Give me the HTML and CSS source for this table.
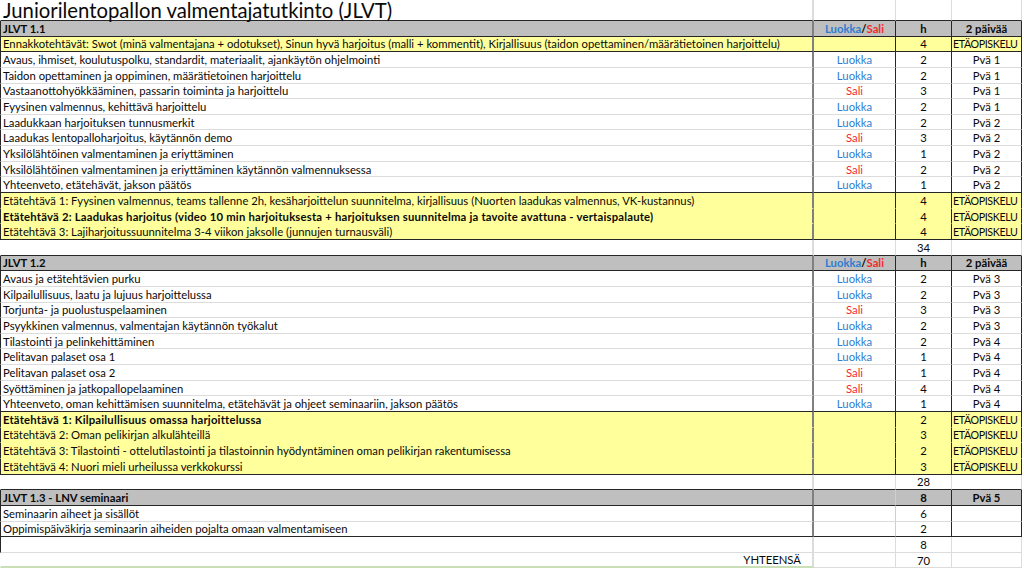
FILE: index.html
```html
<!DOCTYPE html>
<html lang="fi">
<head>
<meta charset="utf-8">
<title>JLVT</title>
<link rel="stylesheet" href="styles.css">
</head>
<body>
<table class="sheet">
<colgroup><col class="ca"><col class="cb"><col class="cc"><col class="cd"></colgroup>
<tr class="title"><td class="a">Juniorilentopallon valmentajatutkinto (JLVT)</td><td></td><td></td><td></td></tr>

<tr class="box hdr"><td class="a">JLVT 1.1</td><td class="b"><span class="blue">Luokka</span>/<span class="red">Sali</span></td><td class="c">h</td><td class="d">2 päivää</td></tr>
<tr class="box yel edge"><td class="a">Ennakkotehtävät: Swot (minä valmentajana + odotukset), Sinun hyvä harjoitus (malli + kommentit), Kirjallisuus (taidon opettaminen/määrätietoinen harjoittelu)</td><td class="b"></td><td class="c">4</td><td class="d etä">ETÄOPISKELU</td></tr>
<tr class="box"><td class="a">Avaus, ihmiset, koulutuspolku, standardit, materiaalit, ajankäytön ohjelmointi</td><td class="b blue">Luokka</td><td class="c">2</td><td class="d">Pvä 1</td></tr>
<tr class="box"><td class="a">Taidon opettaminen ja oppiminen, määrätietoinen harjoittelu</td><td class="b blue">Luokka</td><td class="c">2</td><td class="d">Pvä 1</td></tr>
<tr class="box"><td class="a">Vastaanottohyökkääminen, passarin toiminta ja harjoittelu</td><td class="b red">Sali</td><td class="c">3</td><td class="d">Pvä 1</td></tr>
<tr class="box"><td class="a">Fyysinen valmennus, kehittävä harjoittelu</td><td class="b blue">Luokka</td><td class="c">2</td><td class="d">Pvä 1</td></tr>
<tr class="box"><td class="a">Laadukkaan harjoituksen tunnusmerkit</td><td class="b blue">Luokka</td><td class="c">2</td><td class="d">Pvä 2</td></tr>
<tr class="box"><td class="a">Laadukas lentopalloharjoitus, käytännön demo</td><td class="b red">Sali</td><td class="c">3</td><td class="d">Pvä 2</td></tr>
<tr class="box"><td class="a">Yksilölähtöinen valmentaminen ja eriyttäminen</td><td class="b blue">Luokka</td><td class="c">1</td><td class="d">Pvä 2</td></tr>
<tr class="box"><td class="a">Yksilölähtöinen valmentaminen ja eriyttäminen käytännön valmennuksessa</td><td class="b red">Sali</td><td class="c">2</td><td class="d">Pvä 2</td></tr>
<tr class="box edge"><td class="a">Yhteenveto, etätehävät, jakson päätös</td><td class="b blue">Luokka</td><td class="c">1</td><td class="d">Pvä 2</td></tr>
<tr class="box yel"><td class="a">Etätehtävä 1: Fyysinen valmennus, teams tallenne 2h, kesäharjoittelun suunnitelma, kirjallisuus (Nuorten laadukas valmennus, VK-kustannus)</td><td class="b"></td><td class="c">4</td><td class="d etä">ETÄOPISKELU</td></tr>
<tr class="box yel"><td class="a strong">Etätehtävä 2: Laadukas harjoitus (video 10 min harjoituksesta + harjoituksen suunnitelma ja tavoite avattuna - vertaispalaute)</td><td class="b"></td><td class="c">4</td><td class="d etä">ETÄOPISKELU</td></tr>
<tr class="box yel edge"><td class="a">Etätehtävä 3: Lajiharjoitussuunnitelma 3-4 viikon jaksolle (junnujen turnausväli)</td><td class="b"></td><td class="c">4</td><td class="d etä">ETÄOPISKELU</td></tr>
<tr class="sum edge"><td class="a"></td><td class="b"></td><td class="c">34</td><td class="d"></td></tr>

<tr class="box hdr"><td class="a">JLVT 1.2</td><td class="b"><span class="blue">Luokka</span>/<span class="red">Sali</span></td><td class="c">h</td><td class="d">2 päivää</td></tr>
<tr class="box"><td class="a">Avaus ja etätehtävien purku</td><td class="b blue">Luokka</td><td class="c">2</td><td class="d">Pvä 3</td></tr>
<tr class="box"><td class="a">Kilpailullisuus, laatu ja lujuus harjoittelussa</td><td class="b blue">Luokka</td><td class="c">2</td><td class="d">Pvä 3</td></tr>
<tr class="box"><td class="a">Torjunta- ja puolustuspelaaminen</td><td class="b red">Sali</td><td class="c">3</td><td class="d">Pvä 3</td></tr>
<tr class="box"><td class="a">Psyykkinen valmennus, valmentajan käytännön työkalut</td><td class="b blue">Luokka</td><td class="c">2</td><td class="d">Pvä 3</td></tr>
<tr class="box"><td class="a">Tilastointi ja pelinkehittäminen</td><td class="b blue">Luokka</td><td class="c">2</td><td class="d">Pvä 4</td></tr>
<tr class="box"><td class="a">Pelitavan palaset osa 1</td><td class="b blue">Luokka</td><td class="c">1</td><td class="d">Pvä 4</td></tr>
<tr class="box"><td class="a">Pelitavan palaset osa 2</td><td class="b red">Sali</td><td class="c">1</td><td class="d">Pvä 4</td></tr>
<tr class="box"><td class="a">Syöttäminen ja jatkopallopelaaminen</td><td class="b red">Sali</td><td class="c">4</td><td class="d">Pvä 4</td></tr>
<tr class="box edge"><td class="a">Yhteenveto, oman kehittämisen suunnitelma, etätehävät ja ohjeet seminaariin, jakson päätös</td><td class="b blue">Luokka</td><td class="c">1</td><td class="d">Pvä 4</td></tr>
<tr class="box yel"><td class="a strong">Etätehtävä 1: Kilpailullisuus omassa harjoittelussa</td><td class="b"></td><td class="c">2</td><td class="d etä">ETÄOPISKELU</td></tr>
<tr class="box yel"><td class="a">Etätehtävä 2: Oman pelikirjan alkulähteillä</td><td class="b"></td><td class="c">3</td><td class="d etä">ETÄOPISKELU</td></tr>
<tr class="box yel"><td class="a">Etätehtävä 3: Tilastointi - ottelutilastointi ja tilastoinnin hyödyntäminen oman pelikirjan rakentumisessa</td><td class="b"></td><td class="c">2</td><td class="d etä">ETÄOPISKELU</td></tr>
<tr class="box yel edge"><td class="a">Etätehtävä 4: Nuori mieli urheilussa verkkokurssi</td><td class="b"></td><td class="c">3</td><td class="d etä">ETÄOPISKELU</td></tr>
<tr class="sum edge"><td class="a"></td><td class="b"></td><td class="c">28</td><td class="d"></td></tr>

<tr class="box sem hdr"><td class="a">JLVT 1.3 - LNV seminaari</td><td class="b"></td><td class="c">8</td><td class="d">Pvä 5</td></tr>
<tr class="box sem"><td class="a">Seminaarin aiheet ja sisällöt</td><td class="b"></td><td class="c">6</td><td class="d"></td></tr>
<tr class="box sem edge"><td class="a">Oppimispäiväkirja seminaarin aiheiden pojalta omaan valmentamiseen</td><td class="b"></td><td class="c">2</td><td class="d"></td></tr>
<tr class="sum tail"><td class="a"></td><td class="b"></td><td class="c">8</td><td class="d"></td></tr>
<tr class="sum total"><td class="a">YHTEENSÄ</td><td class="b"></td><td class="c">70</td><td class="d"></td></tr>
</table>
</body>
</html>
```

FILE: styles.css
```css
html, body {
  margin: 0;
  padding: 0;
  background: #ffffff;
}

body {
  font-family: Lato, "Liberation Sans", Arial, sans-serif;
  font-size: 11.3px;
  color: #0a0a0a;
}

.sheet {
  border-collapse: separate;
  border-spacing: 0;
  table-layout: fixed;
  width: 1022px;
}

.ca { width: 814px; }
.cb { width: 82px; }
.cc { width: 56px; }
.cd { width: 70px; }

.sheet tr {
  height: 15.65px;
}

.sheet td {
  padding: 0;
  white-space: nowrap;
  overflow: visible;
  line-height: 13px;
  vertical-align: middle;
  text-align: center;
  border-right: 1px solid #dcdcdc;
  border-bottom: 1px solid #dcdcdc;
}

.sheet td.a {
  text-align: left;
  padding-left: 2px;
  border-left: 1px solid transparent;
  border-right-width: 2px;
}

.sheet td.etä {
  text-align: left;
  padding-left: 1px;
  font-size: 10.7px;
  letter-spacing: -0.4px;
}

/* title row */
.sheet tr.title {
  height: 21px;
}
.sheet tr.title td {
  border-bottom-color: #262626;
}
.sheet tr.title td.a {
  font-size: 20.3px;
  line-height: 20px;
  padding-left: 2px;
}

/* boxed section rows */
.sheet tr.box td.a {
  border-left-color: #262626;
  border-right-color: #808080;
}
.sheet tr.box td.b,
.sheet tr.box td.c,
.sheet tr.box td.d {
  border-right-color: #262626;
}
.sheet tr.sem td.b {
  border-right-color: #cfcfcf;
}

/* header rows */
.sheet tr.hdr td {
  background: #bfbfbf;
  font-weight: bold;
  border-bottom-color: #262626;
}

/* yellow rows */
.sheet tr.yel td {
  background: #ffff9c;
  border-bottom-color: #ffff9c;
}

.sheet tr.edge td {
  border-bottom-color: #262626;
}

.sheet tr.tail td.a {
  border-left-color: #262626;
}

.sheet tr.total td.a {
  text-align: right;
  padding-right: 11px;
  border-bottom: 2px solid #c9dfb6;
}

.strong {
  font-weight: bold;
}

.sheet td.a.strong {
  letter-spacing: 0.2px;
}

.blue {
  color: #2f7dd1;
}

.red {
  color: #f22a2a;
}

.hdr .b {
  color: #0a0a0a;
}
```
